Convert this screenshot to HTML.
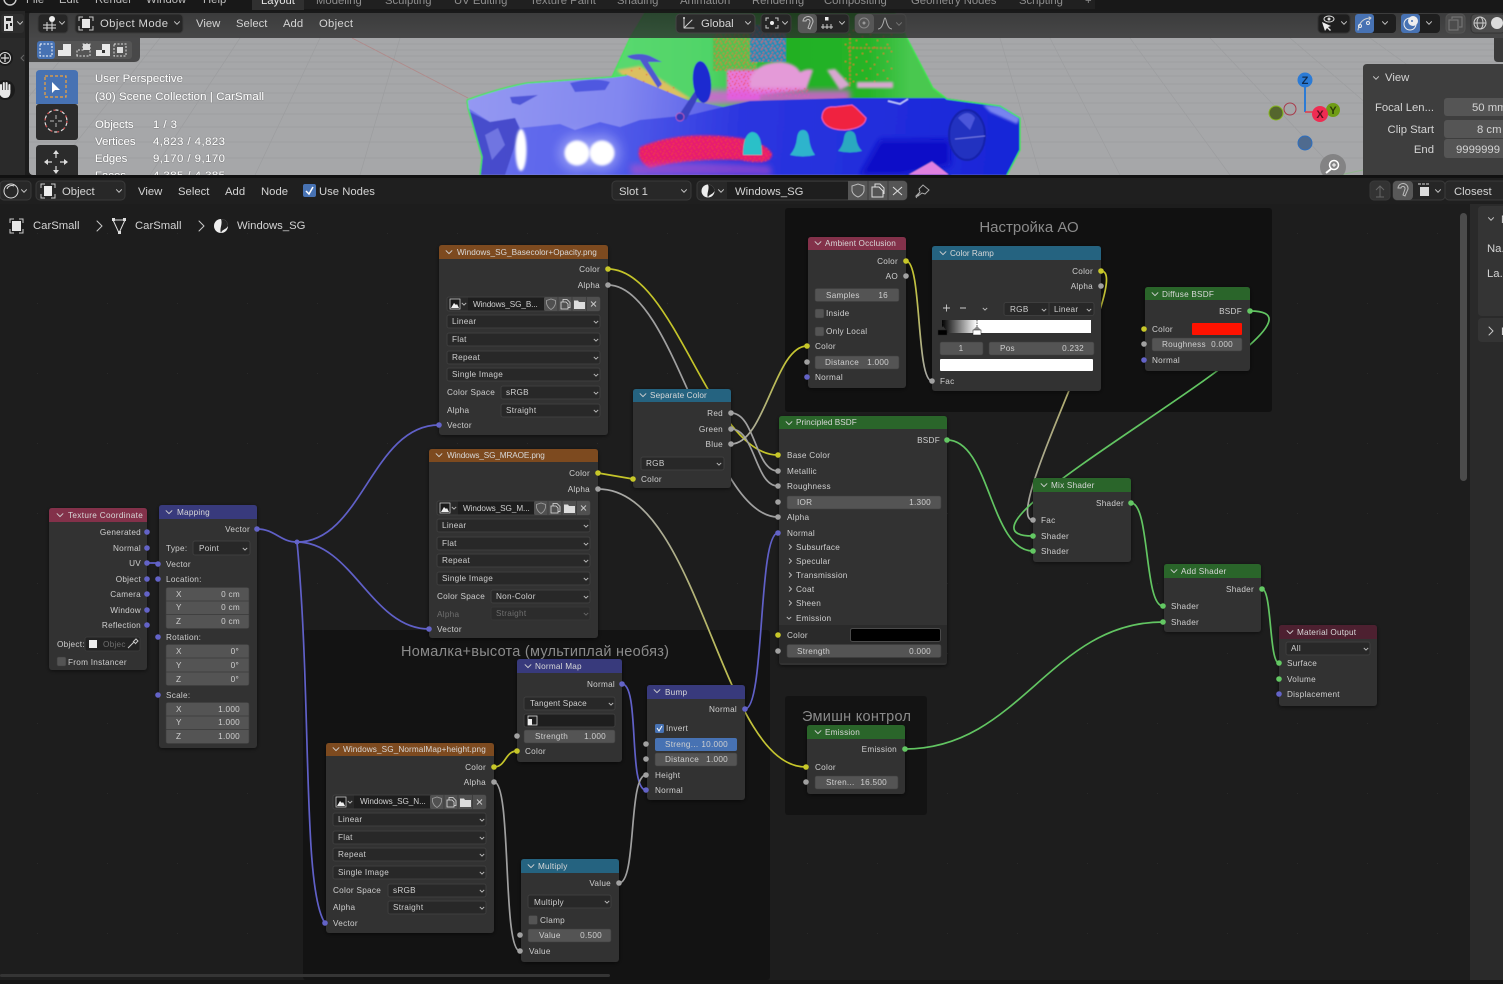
<!DOCTYPE html>
<html><head><meta charset="utf-8"><title>Blender Shader Editor</title>
<style>
html,body{margin:0;padding:0;background:#1d1d1d;overflow:hidden}
svg{display:block;font-family:"Liberation Sans","Noto Sans CJK JP",sans-serif}
.n{fill:#303030;filter:url(#sh)}
.t{font-size:8.2px;fill:#cfcfcf;letter-spacing:.27px}
.r{text-anchor:end}
.c{text-anchor:middle}
.h{font-size:8.2px;fill:#d8d8d8;letter-spacing:.22px}
.dis{fill:#6f6f6f}
.d{fill:#282828;stroke:#3e3e3e;stroke-width:1}
.f{fill:#545454;stroke:#3e3e3e;stroke-width:.6}
.k{fill:#545454;stroke:#3a3a3a;stroke-width:.6}
.y{fill:#c7c729}.g{fill:#a1a1a1}.b{fill:#6363c7}.s{fill:#63c763}
.w{fill:none;stroke-width:1.7;stroke-linecap:round}
.wy{stroke:#c4c42a}.wg{stroke:#a0a0a0}.wb{stroke:#6060c8}.ws{stroke:#62c562}
.u{font-size:11.3px;fill:#d4d4d4}
.ub{fill:#262626;stroke:#3a3a3a;stroke-width:1}
.vt{font-size:11.4px;fill:#fff;filter:url(#ts)}
.fr{font-size:14.5px;fill:#8b8b8b}
.ic{fill:none;stroke:#d0d0d0;stroke-width:1;stroke-linecap:round;stroke-linejoin:round}
.ch{fill:none;stroke:#c8c8c8;stroke-width:1;stroke-linecap:round;stroke-linejoin:round}
</style></head>
<body>
<svg xmlns="http://www.w3.org/2000/svg" width="1503" height="984" viewBox="0 0 1503 984">
<defs>
<filter id="sh" x="-10%" y="-10%" width="120%" height="120%"><feDropShadow dx="0" dy="1" stdDeviation="2" flood-color="#000" flood-opacity=".55"/></filter>
<filter id="ts" x="-5%" y="-30%" width="110%" height="160%"><feDropShadow dx="0" dy="0" stdDeviation=".5" flood-color="#000" flood-opacity=".6"/></filter>
<filter id="bl0"><feGaussianBlur stdDeviation=".5"/></filter>
<filter id="bl1" x="-20%" y="-20%" width="140%" height="140%"><feGaussianBlur stdDeviation="1"/></filter>
<filter id="bl3" x="-30%" y="-30%" width="160%" height="160%"><feGaussianBlur stdDeviation="3"/></filter>
<filter id="bl6" x="-40%" y="-40%" width="180%" height="180%"><feGaussianBlur stdDeviation="6"/></filter>
<clipPath id="vp"><rect x="29" y="11" width="1474" height="164"/></clipPath>
<pattern id="dots" x="37" y="23" width="70" height="70" patternUnits="userSpaceOnUse"><rect width="1" height="1" fill="#2a2a2a"/></pattern>
<pattern id="noise" width="9" height="7" patternUnits="userSpaceOnUse"><rect x="1" y="1" width="1.2" height="1.2" fill="#f0402a"/><rect x="5" y="0" width="1.2" height="1.2" fill="#f0402a"/><rect x="7" y="3" width="1.2" height="1.2" fill="#f0402a"/><rect x="3" y="4" width="1.2" height="1.2" fill="#f0402a"/><rect x="6" y="5.500" width="1.2" height="1.2" fill="#f0402a"/><rect x="0" y="6" width="1.2" height="1.2" fill="#f0402a"/></pattern>
<pattern id="sparse" width="21" height="17" patternUnits="userSpaceOnUse"><rect x="1" y="2" width="1.2" height="1.2" fill="#f0402a"/><rect x="9" y="0" width="1.2" height="1.2" fill="#f0402a"/><rect x="16" y="6" width="1.2" height="1.2" fill="#f0402a"/><rect x="5" y="10" width="1.2" height="1.2" fill="#f0402a"/><rect x="13" y="13" width="1.2" height="1.2" fill="#f0402a"/></pattern>
<linearGradient id="gYG1" gradientUnits="userSpaceOnUse" x1="0" y1="271" x2="0" y2="520"><stop offset="0" stop-color="#c7c729"/><stop offset=".5" stop-color="#b0ac70"/><stop offset="1" stop-color="#a8a8a8"/></linearGradient>
<linearGradient id="gYG2" gradientUnits="userSpaceOnUse" x1="0" y1="261" x2="0" y2="381"><stop offset="0" stop-color="#c7c729"/><stop offset="1" stop-color="#a8a8a8"/></linearGradient>
<linearGradient id="gGY1" gradientUnits="userSpaceOnUse" x1="0" y1="489" x2="0" y2="767"><stop offset="0" stop-color="#a8a8a8"/><stop offset="1" stop-color="#c7c729"/></linearGradient>
<linearGradient id="gGY2" gradientUnits="userSpaceOnUse" x1="0" y1="444" x2="0" y2="346"><stop offset="0" stop-color="#a8a8a8"/><stop offset="1" stop-color="#c7c729"/></linearGradient>
<linearGradient id="hood" gradientUnits="userSpaceOnUse" x1="470" y1="100" x2="1010" y2="140"><stop offset="0" stop-color="#6a72ee"/><stop offset=".25" stop-color="#5660ea"/><stop offset=".5" stop-color="#2c36e0"/><stop offset="1" stop-color="#1826d8"/></linearGradient>
<linearGradient id="lav" gradientUnits="userSpaceOnUse" x1="470" y1="90" x2="720" y2="110"><stop offset="0" stop-color="#9498f2"/><stop offset=".6" stop-color="#8287f0"/><stop offset="1" stop-color="#5a60e8"/></linearGradient>
<linearGradient id="roof" gradientUnits="userSpaceOnUse" x1="630" y1="0" x2="910" y2="0"><stop offset="0" stop-color="#58d86e"/><stop offset=".28" stop-color="#50d468"/><stop offset=".55" stop-color="#22b024"/><stop offset=".85" stop-color="#26b428"/><stop offset="1" stop-color="#48c850"/></linearGradient>
<linearGradient id="ramp" x1="0" y1="0" x2="1" y2="0"><stop offset="0" stop-color="#000"/><stop offset=".232" stop-color="#fff"/><stop offset="1" stop-color="#fff"/></linearGradient>
<linearGradient id="hdr" x1="0" y1="0" x2="0" y2="1"><stop offset="0" stop-color="#1c1c1c"/><stop offset="1" stop-color="#2c2c2c"/></linearGradient>
<polyline id="v" class="ch" points="-2.500,-1.300 0,1.300 2.500,-1.300"/>
<polyline id="vs" points="-2.200,-1.100 0,1.100 2.200,-1.100" fill="none" stroke="#bdbdbd" stroke-width=".9"/>
<polyline id="vh" points="-3.200,-1.600 0,1.600 3.200,-1.600" fill="none" stroke="#d0d0d0" stroke-width=".9"/>
<polyline id="rt" points="-1,-2.500 1.500,0 -1,2.500" fill="none" stroke="#bdbdbd" stroke-width=".9"/>
<g id="imgrow"><rect x="0" y="0" width="153" height="14" rx="2" fill="#282828" stroke="#3e3e3e"/><rect x="97" y="0" width="56" height="14" rx="2" fill="#505050"/><rect x="21" y="0.500" width="76" height="13" fill="#1e1e1e"/><path d="M111 0v14M125 0v14M139.500 0v14" stroke="#3a3a3a" stroke-width=".8"/><rect x="3" y="2" width="10" height="10" fill="#1a1a1a" stroke="#ddd" stroke-width=".7"/><path d="M4 11l3-5 2 2 1-1 2 4z" fill="#eee"/><use href="#vs" x="17" y="7"/><path d="M99.500 3.500l4.500-1.500 4.500 1.500v3q-1 4-4.500 6-3.500-2-4.500-6z" fill="none" stroke="#9a9a9a" stroke-width=".9"/><path d="M114 5h5l2 2v5h-7zM116 5V2.500h4l3 3v5h-2" fill="none" stroke="#ddd" stroke-width=".8"/><path d="M127 12V3.500h4l1 1.500h6v7z" fill="#ddd"/><path d="M144 4.500l5 5m0-5l-5 5" stroke="#ccc" stroke-width=".9"/></g>
</defs>

<!-- page backdrop -->
<rect width="1503" height="984" fill="#1d1d1d"/>

<!-- top bar -->
<rect width="1503" height="11" fill="#181818"/>
<rect x="252" y="0" width="843" height="9" fill="#202020"/>
<rect x="252" y="0" width="52" height="10" fill="#303030"/>
<g font-size="11.3" fill="#bdbdbd">
<text x="26" y="3">File</text><text x="59" y="3">Edit</text><text x="95" y="3">Render</text><text x="146" y="3">Window</text><text x="203" y="3">Help</text>
<text x="261" y="4" fill="#e6e6e6">Layout</text>
<g fill="#8e8e8e"><text x="316" y="4">Modeling</text><text x="385" y="4">Sculpting</text><text x="454" y="4">UV Editing</text><text x="530" y="4">Texture Paint</text><text x="617" y="4">Shading</text><text x="680" y="4">Animation</text><text x="752" y="4">Rendering</text><text x="824" y="4">Compositing</text><text x="911" y="4">Geometry Nodes</text><text x="1019" y="4">Scripting</text><text x="1085" y="4">+</text></g>
</g>
<circle cx="10" cy="-1" r="6" fill="none" stroke="#ccc" stroke-width="1.500"/>

<!-- 3D viewport floor -->
<rect x="0" y="11" width="29" height="164" fill="#1c1c1c"/>
<rect x="29" y="11" width="1474" height="164" rx="4" fill="#a6a7a9"/>
<g stroke="#9c9d9f" stroke-width=".7">
<path d="M29 44H1503M29 50H1503M29 56H1503M29 62H1503M29 69H1503M29 76H1503M29 84H1503M29 93H1503M29 103H1503M29 114H1503M29 127H1503M29 142H1503M29 158H1503"/>
<path d="M80 38L-40 175M160 38L50 175M240 38L150 175M320 38L255 175M400 38L360 175M1050 38L1120 175M1130 38L1230 175M1210 38L1340 175M1290 38L1450 175M1370 38L1560 175M1000 38L1040 175"/>
</g>
<path d="M352 38L468 98" stroke="#b08a8a" stroke-width=".9"/>
<path d="M1340 175L1363 170" stroke="#8fb58a" stroke-width=".9"/>

<!-- car -->
<g clip-path="url(#vp)"><g filter="url(#bl0)">
<path d="M612 77L630 38L648 8H893L907 38L933 88L947 99V112H612Z" fill="url(#roof)" stroke="#36f04a" stroke-width="1"/>
<rect x="713" y="38" width="44" height="33" fill="#58c050"/>
<rect x="713" y="25" width="44" height="46" fill="url(#noise)"/>
<path d="M617 70L640 66L693 100L640 92Z" fill="#dcc060" filter="url(#bl1)"/>
<path d="M617 72L640 68L690 96L660 92Z" fill="url(#sparse)"/>
<rect x="750" y="25" width="36" height="37" fill="#2c8ab4"/>
<rect x="750" y="25" width="36" height="37" fill="url(#noise)"/>
<rect x="845" y="25" width="50" height="62" fill="url(#sparse)"/>
<path d="M850 38V85M848 48H890" stroke="#e06a30" stroke-width="1.600" stroke-dasharray="2 2" opacity=".8"/>
<path d="M727 70H760V100H727Z" fill="#e878d8" filter="url(#bl1)"/>
<rect x="727" y="70" width="33" height="27" fill="url(#noise)"/>
<path d="M750 78Q758 62 782 62Q796 64 800 72Q808 68 813 70L806 90L750 96Z" fill="#e49ad8" filter="url(#bl1)"/>
<rect x="750" y="88" width="60" height="9" fill="url(#noise)"/>
<path d="M827 70L835 69L850 85L840 90Z" fill="#d8a8d0" filter="url(#bl1)"/>
<rect x="857" y="82" width="36" height="6" fill="#d8a8d0" filter="url(#bl1)"/>
<rect x="700" y="90" width="150" height="14" fill="#e058e0" opacity=".8" filter="url(#bl3)"/>

<path d="M467 100Q500 88 527 83L612 77L627 75L687 100L723 107L750 101L850 98L945 98L1000 106L1020 118V150L1007 175H480L482 157L468 108Z" fill="url(#hood)"/>
<path d="M467 100Q500 88 527 83L612 77L627 75L687 100L723 107L690 115L640 120L620 127L600 122L575 130L560 124L520 128L515 118L490 122L468 108Z" fill="url(#lav)"/>
<path d="M570 83Q595 77 610 82L605 90L575 92Z" fill="#4f58e0"/>
<path d="M510 97L538 95L520 105L512 103Z" fill="#4f56d8"/>
<path d="M490 122L515 118L520 130L505 175H480L482 157L470 112Z" fill="#3c42c0" opacity=".75"/>
<path d="M485 135L498 128L505 145L492 160Z" fill="#8a90ee" opacity=".6"/>
<path d="M983 105L1000 106L1020 118L1017 124L990 112Z" fill="#7884f0" filter="url(#bl1)"/>
<path d="M880 140H950V165L900 175H860Z" fill="#0c10c8" filter="url(#bl3)"/>
<path d="M888 101L900 104L908 99" fill="none" stroke="#c4ccff" stroke-width="1.500"/>
<path d="M467 100Q500 88 527 83L612 77L627 75M933 88L947 99L1000 106L1020 118V150L1007 175M480 175L482 157L468 108L467 100" fill="none" stroke="#3cf04a" stroke-width="1.300"/>

<path d="M640 147Q680 130 740 138Q770 145 772 155Q770 166 740 160Q690 158 650 168Q635 160 640 147Z" fill="#e81a70" filter="url(#bl1)"/>
<path d="M640 147Q680 130 740 138Q770 145 772 155Q770 166 740 160Q690 158 650 168Q635 160 640 147Z" fill="url(#noise)"/>
<path d="M630 165Q700 160 770 166L772 175H632Z" fill="#c050c8" opacity=".55" filter="url(#bl3)"/>
<path d="M743 155Q743 134 752 132Q762 132 762 155Z" fill="#2cc0c8"/>
<path d="M790 155Q796 148 797 138Q798 130 803 130Q808 130 809 138Q810 148 815 155Q803 158 790 155Z" fill="#2eb4cc"/>
<path d="M838 151Q843 146 844 138Q845 131 850 131Q855 131 856 138Q857 146 862 151Q850 154 838 151Z" fill="#2aa8c0"/>
<path d="M822 118Q822 106 835 107L852 105L856 108L866 118Q865 128 845 130Q825 130 822 118Z" fill="#f02040" stroke="#f060b0" stroke-width="1"/>
<ellipse cx="967" cy="135" rx="18" ry="25" fill="#2030c0" stroke="#1622a8" stroke-width="2"/>
<path d="M958 118Q968 108 975 118L970 130Z" fill="#5860e0" opacity=".8"/>
<path d="M955 139L985 136" stroke="#8a90ee" stroke-width=".8"/>
<path d="M907 175L932 161L950 175Z" fill="#e080e0" stroke="#2030c0"/>
<ellipse cx="521" cy="150" rx="5.500" ry="21" fill="#fff" filter="url(#bl1)"/>
<circle cx="577" cy="153" r="18" fill="#c0c4ff" opacity=".55" filter="url(#bl6)"/>
<circle cx="602" cy="153" r="18" fill="#c0c4ff" opacity=".55" filter="url(#bl6)"/>
<circle cx="577" cy="153" r="12.500" fill="#fff" filter="url(#bl1)"/>
<circle cx="602" cy="153" r="12.500" fill="#fff" filter="url(#bl1)"/>
<path d="M627 56Q640 52 650 56L662 62L652 62L648 62L662 84L658 88L640 60Q630 60 627 56Z" fill="#5058d0"/>
<path d="M677 118L697 88L702 90L686 120Z" fill="#3a42c0"/>
<circle cx="680" cy="117" r="4" fill="#3038b8" stroke="#d060b8" stroke-width=".7"/>
<ellipse cx="702" cy="82" rx="9" ry="21" fill="#1e2ad0" transform="rotate(-6 702 82)"/>
</g></g>

<!-- viewport header overlay -->
<rect x="29" y="11" width="1474" height="27" fill="url(#hdr)" opacity=".78"/>
<rect x="0" y="11" width="1503" height="2" fill="#161616" opacity=".9"/>
<path d="M29 38H140V56Q140 62 134 62H29Z" fill="#3e3e3e" opacity=".9"/>

<!-- left toolbar -->
<rect x="0" y="11" width="25" height="164" fill="#262626"/>
<rect x="0" y="38" width="28" height="137" fill="#2a2a2a"/>
<rect x="25" y="38" width="4" height="137" fill="#1c1c1c"/>
<rect x="1" y="14" width="23" height="19" rx="3" fill="#2e2e2e"/>
<rect x="4" y="16" width="9" height="15" fill="#ddd"/><path d="M6 18h5v3H6zM6 24h2v5H6zM10 23h2v3h-2z" fill="#222"/>
<use href="#v" x="20" y="23"/>
<circle cx="5" cy="58" r="8" fill="#1b1b1b"/><path d="M5 54v8M1 58h8" stroke="#ddd" stroke-width="1.200"/><circle cx="5" cy="58" r="5.500" fill="none" stroke="#ddd"/>
<polyline points="24,55 21,58 24,61" fill="none" stroke="#666"/>
<circle cx="5" cy="90" r="10" fill="#1b1b1b"/>
<path d="M1 92V85M3.800 90V83M6.600 90V83M9.400 91V85" stroke="#e8e8e8" stroke-width="2" fill="none" stroke-linecap="round"/>
<path d="M0 90H10.400V93Q10 98 5 98Q1 98 -1 93Z" fill="#e8e8e8"/>

<!-- selection-mode row -->
<rect x="37" y="41" width="95" height="18" rx="3" fill="#555"/>
<rect x="37" y="41" width="18" height="18" rx="3" fill="#4772b3"/>
<rect x="40" y="44" width="12" height="12" fill="none" stroke="#fff" stroke-dasharray="2 1.500"/>
<path d="M58 56V50H63V44H71V56Z" fill="#e8e8e8"/>
<path d="M77 56V50H83V44H90V56Z" fill="none" stroke="#ddd" stroke-dasharray="2 1.500"/><rect x="83" y="44" width="7" height="6" fill="#ddd"/>
<path d="M96 56V50H102V44H110V56Z" fill="#e8e8e8"/><rect x="102" y="50" width="3" height="3" fill="#333"/>
<rect x="114" y="44" width="12" height="12" fill="none" stroke="#ddd" stroke-dasharray="2 1.500"/><rect x="117" y="47" width="6" height="6" fill="#ddd"/>

<!-- viewport header widgets -->
<rect x="38" y="14" width="30" height="19" rx="4" class="ub"/>
<path d="M43 28H56M47 22V31M52 22V31M43 25H56" stroke="#ddd" fill="none" stroke-width="1"/><circle cx="52" cy="19" r="3" fill="#eee"/><use href="#v" x="62" y="23"/>
<rect x="75" y="14" width="108" height="19" rx="4" class="ub"/>
<rect x="82" y="19" width="8" height="9" fill="#e8e8e8"/><path d="M79 21V17H83M89 17H93V21M93 26V30H89M83 30H79V26" stroke="#ccc" fill="none"/>
<text x="100" y="27" class="u" textLength="68" fill="#e0e0e0">Object Mode</text><use href="#v" x="177" y="23"/>
<text x="196" y="27" class="u">View</text><text x="236" y="27" class="u">Select</text><text x="283" y="27" class="u">Add</text><text x="319" y="27" class="u" textLength="34">Object</text>

<rect x="676" y="14" width="79" height="19" rx="4" fill="#2b2b2b" stroke="#444"/>
<path d="M684 18V28H694M684 28L692 20" class="ic"/><circle cx="684" cy="18" r="1" fill="#ddd"/>
<text x="701" y="27" class="u">Global</text><use href="#v" x="748" y="23"/>
<rect x="761" y="14" width="30" height="19" rx="4" fill="#262626" stroke="#3c3c3c"/>
<circle cx="772" cy="23" r="2" fill="#eee"/><path d="M766 21V18H769M775 18H778V21M778 25V28H775M769 28H766V25" stroke="#ccc" fill="none"/><use href="#v" x="785" y="23"/>
<rect x="798" y="14" width="51" height="19" rx="4" fill="#262626" stroke="#3c3c3c"/>
<rect x="798" y="14" width="19" height="19" rx="4" fill="#585858"/>
<path d="M803 21a5 5 0 1 1 10 1l-3 7-2-1 2-6a2 2 0 1 0-4-1z" fill="none" stroke="#bbb"/>
<path d="M821 27H833M823 24V29M827 24V29M831 24V29" stroke="#ccc"/><rect x="825" y="17" width="3.500" height="3.500" fill="#eee"/><use href="#v" x="842" y="23"/>
<rect x="855" y="14" width="51" height="19" rx="4" fill="#3c3c3c" stroke="#464646"/>
<rect x="855" y="14" width="19" height="19" rx="4" fill="#565656"/><circle cx="864" cy="23" r="5" fill="none" stroke="#888"/><circle cx="864" cy="23" r="1.500" fill="#999"/>
<path d="M878 29Q882 29 884 20Q885 16 886 20Q888 29 892 29" fill="none" stroke="#aaa"/><use href="#v" x="899" y="24" opacity=".4"/>

<rect x="1318" y="14" width="32" height="19" rx="4" fill="#1e1e1e" stroke="#333"/>
<path d="M1322 22l3 9 2-3 3 3 1-1-3-3 3-1z" fill="#eee"/><ellipse cx="1329" cy="19" rx="5" ry="3" fill="none" stroke="#ddd"/><circle cx="1329" cy="19" r="1.500" fill="#ddd"/><use href="#v" x="1344" y="23"/>
<rect x="1355" y="14" width="41" height="19" rx="4" fill="#1e1e1e"/><rect x="1355" y="14" width="19" height="19" rx="3" fill="#4772b3"/>
<path d="M1358 30Q1360 18 1371 18M1369 17l2 1-2 2" class="ic"/><circle cx="1360" cy="26" r="1.500" fill="none" stroke="#eee"/><circle cx="1368" cy="23" r="1.500" fill="none" stroke="#eee"/><use href="#v" x="1385" y="23"/>
<rect x="1401" y="14" width="39" height="19" rx="4" fill="#1e1e1e"/><rect x="1401" y="14" width="19" height="19" rx="3" fill="#4772b3"/>
<circle cx="1410" cy="24" r="6" fill="none" stroke="#eee"/><circle cx="1413" cy="21" r="5" fill="#eee"/><circle cx="1412" cy="21" r="1" fill="#4772b3"/><use href="#v" x="1429" y="23"/>
<rect x="1446" y="14" width="19" height="19" rx="4" fill="#4c4c4c" stroke="#555"/><path d="M1452 19V17H1462V27H1459M1449 20H1458V30H1449Z" fill="none" stroke="#7a7a7a"/>
<rect x="1471" y="14" width="34" height="19" rx="4" fill="#4c4c4c" stroke="#333"/>
<circle cx="1480" cy="23" r="6" fill="none" stroke="#ccc"/><ellipse cx="1480" cy="23" rx="3" ry="6" fill="none" stroke="#ccc"/><path d="M1474 23h12" stroke="#ccc"/>
<circle cx="1497" cy="23" r="6" fill="#dcdcdc"/>

<!-- viewport overlay text -->
<text x="95" y="82" class="vt" textLength="88">User Perspective</text>
<text x="95" y="100" class="vt" textLength="169">(30) Scene Collection | CarSmall</text>
<text x="95" y="128" class="vt">Objects</text><text x="153" y="128" class="vt" textLength="24">1 / 3</text>
<text x="95" y="145" class="vt">Vertices</text><text x="153" y="145" class="vt" textLength="72">4,823 / 4,823</text>
<text x="95" y="162" class="vt">Edges</text><text x="153" y="162" class="vt" textLength="72">9,170 / 9,170</text>
<text x="95" y="179" class="vt">Faces</text><text x="153" y="179" class="vt" textLength="72">4,385 / 4,385</text>
<!-- tools -->
<rect x="36" y="104" width="42" height="36" rx="3" fill="#2b2b2b"/>
<path d="M36 104V74Q36 70 40 70H74Q78 70 78 74V104Z" fill="#4772b3"/>
<rect x="45" y="76" width="21" height="21" fill="none" stroke="#f2a33a" stroke-width="1.200" stroke-dasharray="3 2"/>
<path d="M52 82V93L55 90L60 90Z" fill="#fff"/>
<circle cx="56" cy="121" r="11" fill="none" stroke="#ddd" stroke-width="1.200" stroke-dasharray="5 2"/><circle cx="56" cy="121" r="11" fill="none" stroke="#c44" stroke-width="1.200" stroke-dasharray="2 5"/>
<path d="M56 115v4M56 123v4M50 121h4M58 121h4" stroke="#bbb"/>
<path d="M36 175V149Q36 145 40 145H74Q78 145 78 149V175Z" fill="#2b2b2b"/>
<path d="M56 153v5M56 166v5M47 162h5M60 162h5" stroke="#ddd" stroke-width="1.200"/><path d="M56 150l-3 4h6zM56 174l-3-4h6zM44 162l4-3v6zM68 162l-4-3v6z" fill="#ddd"/>

<!-- gizmo -->
<path d="M1305 85V112" stroke="#2b7bd6" stroke-width="2"/><path d="M1305 112H1316" stroke="#e03a4a" stroke-width="1.500"/>
<circle cx="1290" cy="109" r="6" fill="none" stroke="#a83a4a" stroke-width="1"/>
<circle cx="1276" cy="113" r="7" fill="#55662e" stroke="#86b71e" stroke-width="1"/>
<circle cx="1305" cy="143" r="7" fill="#4f6b8f" stroke="#2d6fc0" stroke-width="1"/>
<circle cx="1333" cy="110" r="7" fill="#6f9c14"/><text x="1333" y="114" class="c" font-size="11" font-weight="bold" fill="#2c3a08">Y</text>
<circle cx="1305" cy="80" r="7.500" fill="#2b7bd6"/><text x="1305" y="84" class="c" font-size="11" font-weight="bold" fill="#0f2c50">Z</text>
<circle cx="1320" cy="114" r="8" fill="#ef2c52"/><text x="1320" y="118" class="c" font-size="11" font-weight="bold" fill="#5a0f1e">X</text>
<circle cx="1333" cy="167" r="13" fill="#7a7a7a" opacity=".8"/><circle cx="1334" cy="165" r="4.500" fill="none" stroke="#fff" stroke-width="1.500"/><path d="M1331 169l-5 4" stroke="#fff" stroke-width="2"/><path d="M1334 163v4M1332 165h4" stroke="#fff"/>

<!-- N panel in viewport -->
<path d="M1494 38V58Q1494 62 1498 62H1503V38Z" fill="#3a3a3a"/>
<path d="M1363 175V68Q1363 64 1367 64H1503V175Z" fill="#3e3e3e"/>
<use href="#v" x="1376" y="78"/>
<text x="1385" y="81" class="u" fill="#eee">View</text>
<text x="1434" y="111" class="r u">Focal Len...</text><text x="1434" y="133" class="r u">Clip Start</text><text x="1434" y="153" class="r u">End</text>
<rect x="1444" y="98" width="70" height="18" rx="3" fill="#555"/><rect x="1444" y="120" width="70" height="18" rx="3" fill="#555"/><rect x="1444" y="139" width="70" height="19" rx="3" fill="#555"/>
<text x="1472" y="111" class="u">50 mm</text><text x="1477" y="133" class="u">8 cm</text><text x="1456" y="153" class="u">9999999</text>

<!-- divider + node editor -->
<rect x="0" y="175" width="1503" height="3" fill="#111"/>
<rect x="0" y="178" width="1503" height="26" fill="#1f1f1f"/>
<rect x="0" y="204" width="1503" height="780" fill="#1d1d1d"/>
<rect x="0" y="204" width="1470" height="776" fill="url(#dots)"/>

<!-- node editor header -->
<rect x="0" y="181" width="31" height="19" rx="4" fill="#282828" stroke="#3a3a3a"/>
<circle cx="11" cy="191" r="7" fill="none" stroke="#ddd"/><path d="M7 189a5 5 0 0 1 7-3" fill="none" stroke="#ddd"/><use href="#v" x="24" y="191"/>
<rect x="36" y="181" width="89" height="19" rx="4" fill="#282828" stroke="#3a3a3a"/>
<rect x="44" y="186" width="8" height="10" fill="#eee"/><path d="M41 188V184H45M51 184H55V188M55 194V198H51M45 198H41V194" stroke="#ccc" fill="none"/>
<text x="62" y="195" class="u">Object</text><use href="#v" x="119" y="191"/>
<text x="138" y="195" class="u">View</text><text x="178" y="195" class="u">Select</text><text x="225" y="195" class="u">Add</text><text x="261" y="195" class="u">Node</text>
<rect x="303" y="184" width="13" height="13" rx="2" fill="#4772b3"/><polyline points="306,191 309,194 313,187" fill="none" stroke="#fff" stroke-width="1.500"/>
<text x="319" y="195" class="u" fill="#eee">Use Nodes</text>
<rect x="612" y="181" width="79" height="19" rx="4" fill="#282828" stroke="#3a3a3a"/><text x="619" y="195" class="u">Slot 1</text><use href="#v" x="684" y="191"/>
<rect x="697" y="181" width="210" height="19" rx="4" fill="#282828" stroke="#3a3a3a"/>
<circle cx="708" cy="191" r="6.500" fill="#eee"/><path d="M708 184.500A6.500 6.500 0 0 1 714.500 191C712.500 195 709 194 708 197.500C706 194 710 189 708 184.500Z" fill="#222"/><use href="#v" x="721" y="191"/>
<rect x="727" y="182" width="121" height="17" fill="#1e1e1e"/>
<text x="735" y="195" class="u">Windows_SG</text>
<path d="M848 181H903Q907 181 907 185V196Q907 200 903 200H848Z" fill="#555"/>
<path d="M868 181v19M888 181v19" stroke="#3a3a3a"/>
<path d="M852 186l6-2 6 2v5q-1 4-6 6-5-2-6-6z" fill="none" stroke="#bbb"/>
<path d="M872 187h7l4 4v6h-11zM875 187v-3h5l4 4v6" fill="none" stroke="#ddd"/>
<path d="M893 187l9 8m0-8l-9 8" stroke="#ddd"/>
<path d="M916 196l4-4-1-3 4-4 6 5-4 4-3-1-4 3z M920 192l-4 6" fill="none" stroke="#aaa"/>
<rect x="1370" y="181" width="20" height="19" rx="4" fill="#333" stroke="#3a3a3a"/><path d="M1380 197V186M1376 190l4-4 4 4M1376 197h8" fill="none" stroke="#666"/>
<rect x="1393" y="181" width="52" height="19" rx="4" fill="#262626" stroke="#3a3a3a"/><rect x="1393" y="181" width="20" height="19" rx="4" fill="#585858"/>
<path d="M1398 188a5 5 0 1 1 10 1l-3 7-2-1 2-6a2 2 0 1 0-4-1z" fill="none" stroke="#bbb"/>
<path d="M1418 184h12" stroke="#ddd" stroke-dasharray="3 1"/><rect x="1420" y="187" width="9" height="9" fill="#ddd"/><use href="#v" x="1438" y="191"/>
<rect x="1445" y="181" width="62" height="19" rx="4" fill="#282828" stroke="#3a3a3a"/><text x="1454" y="195" class="u">Closest</text>

<!-- breadcrumb -->
<rect x="12" y="221" width="9" height="10" fill="#e8e8e8"/><path d="M10 223V219H14M19 219H23V223M23 229V233H19M14 233H10V229" stroke="#ccc" fill="none"/>
<text x="33" y="229" class="u">CarSmall</text>
<polyline points="97,221 102,226 97,231" class="ch"/>
<path d="M113 220L125 220L119 233Z" fill="none" stroke="#ddd"/><rect x="112" y="218" width="3" height="3" fill="#ddd"/><rect x="123" y="218" width="3" height="3" fill="#ddd"/><rect x="118" y="231" width="3" height="3" fill="#ddd"/>
<text x="135" y="229" class="u">CarSmall</text>
<polyline points="199,221 204,226 199,231" class="ch"/>
<circle cx="221" cy="226" r="7" fill="#eee"/><path d="M221 219A7 7 0 0 1 228 226C226 230 222 229 221 233C219 229 223 224 221 219Z" fill="#222"/>
<text x="237" y="229" class="u">Windows_SG</text>

<!-- frames -->
<rect x="785" y="208" width="487" height="204" rx="3" fill="#111"/>
<rect x="303" y="630" width="467" height="350" rx="3" fill="#131313"/>
<rect x="785" y="696" width="142" height="119" rx="3" fill="#131313"/>
<text x="1029" y="232" class="c fr" style="font-size:15px">Настройка АО</text>
<text x="401" y="656" class="fr" textLength="268">Номалка+высота (мультиплай необяз)</text>
<text x="802" y="721" class="fr" textLength="109">Эмишн контрол</text>

<!-- wires -->
<g>
<path class="w wb" d="M147 563H158"/>
<path class="w wb" d="M257 529C275 529 280 542 297 542"/>
<path class="w wb" d="M297 542C362 542 372 425 439 425"/>
<path class="w wb" d="M297 542C352 542 372 629 429 629"/>
<path class="w wb" d="M297 542C312 700 302 890 325 923"/>
<path class="w wy" d="M598 473L633 479"/>
<path class="w wg" d="M608 285C675 285 710 517 778 517"/>
<path class="w wy" d="M608 269C675 269 710 455 778 455"/>
<path class="w wg" d="M731 413C755 413 755 471 778 471"/>
<path class="w wg" d="M731 429C755 429 755 486 778 486"/>
<path class="w" stroke="url(#gGY2)" d="M731 444C765 444 775 346 807 346"/>
<path class="w" stroke="url(#gGY1)" d="M598 489C700 489 720 767 806 767"/>
<path class="w" stroke="url(#gYG2)" d="M906 261C922 261 916 381 932 381"/>
<path class="w" stroke="url(#gYG1)" d="M1101 271C1135 271 999 520 1033 520"/>
<path class="w ws" d="M1250 311C1365 311 918 536 1033 536"/>
<path class="w ws" d="M947 440C990 440 990 551 1033 551"/>
<path class="w ws" d="M1131 503C1150 503 1144 606 1163 606"/>
<path class="w ws" d="M1262 589C1272 589 1269 663 1279 663"/>
<path class="w ws" d="M905 749C1020 749 1050 622 1163 622"/>
<path class="w wb" d="M622 684C640 684 628 790 646 790"/>
<path class="w wb" d="M745 709C765 709 758 533 778 533"/>
<path class="w wy" d="M494 767C506 767 505 751 517 751"/>
<path class="w wg" d="M494 782C512 782 502 951 520 951"/>
<path class="w wg" d="M619 883C637 883 628 775 646 775"/>
</g>
<circle cx="297" cy="542" r="2.500" class="b"/>

<!-- Texture Coordinate -->
<rect class="n" x="49" y="508" width="98" height="162" rx="3"/>
<path d="M49 522V511Q49 508 52 508H144Q147 508 147 511V522Z" fill="#83314a"/>
<use href="#vh" x="60" y="515"/><text x="68" y="518" class="h" textLength="75">Texture Coordinate</text>
<text x="141" y="535" class="t r">Generated</text><text x="141" y="551" class="t r">Normal</text><text x="141" y="566" class="t r">UV</text><text x="141" y="582" class="t r">Object</text><text x="141" y="597" class="t r">Camera</text><text x="141" y="613" class="t r">Window</text><text x="141" y="628" class="t r">Reflection</text>
<text x="57" y="647" class="t">Object:</text>
<rect x="85" y="637" width="55" height="14" rx="2" fill="#232323" stroke="#3a3a3a"/>
<rect x="89" y="640" width="8" height="8" fill="#eee"/><text x="103" y="647" class="t dis">Objec</text>
<path d="M128 648l6-6m-1-1l3 3m-2-3l2-2 2 2-2 2" stroke="#ccc" fill="none"/>
<rect x="57" y="657" width="9" height="9" rx="1.500" class="k"/><text x="68" y="665" class="t">From Instancer</text>

<!-- Mapping -->
<rect class="n" x="159" y="505" width="98" height="243" rx="3"/>
<path d="M159 519V508Q159 505 162 505H254Q257 505 257 508V519Z" fill="#383a7c"/>
<use href="#vh" x="169" y="512"/><text x="177" y="515" class="h">Mapping</text>
<text x="250" y="532" class="t r">Vector</text>
<text x="166" y="551" class="t">Type:</text><rect x="193" y="541" width="57" height="14" rx="2" class="d"/><text x="199" y="551" class="t">Point</text><use href="#vs" x="245" y="549"/>
<text x="166" y="567" class="t">Vector</text><text x="166" y="582" class="t">Location:</text>
<rect x="166" y="587.500" width="83" height="41" rx="2" class="f"/>
<text x="176" y="597" class="t">X</text><text x="176" y="610" class="t">Y</text><text x="176" y="624" class="t">Z</text>
<text x="240" y="597" class="t r">0 cm</text><text x="240" y="610" class="t r">0 cm</text><text x="240" y="624" class="t r">0 cm</text>
<path d="M166 601H249M166 614.500H249" stroke="#3a3a3a" stroke-width=".8"/>
<text x="166" y="640" class="t">Rotation:</text>
<rect x="166" y="644.500" width="83" height="41" rx="2" class="f"/>
<text x="176" y="654" class="t">X</text><text x="176" y="668" class="t">Y</text><text x="176" y="682" class="t">Z</text>
<text x="239" y="654" class="t r">0°</text><text x="239" y="668" class="t r">0°</text><text x="239" y="682" class="t r">0°</text>
<path d="M166 658H249M166 672H249" stroke="#3a3a3a" stroke-width=".8"/>
<text x="166" y="698" class="t">Scale:</text>
<rect x="166" y="702.500" width="83" height="41" rx="2" class="f"/>
<text x="176" y="712" class="t">X</text><text x="176" y="725" class="t">Y</text><text x="176" y="739" class="t">Z</text>
<text x="240" y="712" class="t r">1.000</text><text x="240" y="725" class="t r">1.000</text><text x="240" y="739" class="t r">1.000</text>
<path d="M166 716H249M166 729.500H249" stroke="#3a3a3a" stroke-width=".8"/>

<!-- Image 1 -->
<rect class="n" x="439" y="245" width="169" height="190" rx="3"/>
<path d="M439 259V248Q439 245 442 245H605Q608 245 608 248V259Z" fill="#7d4a1f"/>
<use href="#vh" x="449" y="252"/><text x="457" y="255" class="h" textLength="140">Windows_SG_Basecolor+Opacity.png</text>
<text x="600" y="272" class="t r">Color</text><text x="600" y="288" class="t r">Alpha</text>
<use href="#imgrow" x="447" y="297"/><text x="473" y="307" class="t" textLength="65">Windows_SG_B...</text>
<rect x="447" y="315" width="153" height="13" rx="2" class="d"/><text x="452" y="324" class="t">Linear</text><use href="#vs" x="596" y="322"/>
<rect x="447" y="333" width="153" height="13" rx="2" class="d"/><text x="452" y="342" class="t">Flat</text><use href="#vs" x="596" y="340"/>
<rect x="447" y="351" width="153" height="13" rx="2" class="d"/><text x="452" y="360" class="t">Repeat</text><use href="#vs" x="596" y="358"/>
<rect x="447" y="368" width="153" height="13" rx="2" class="d"/><text x="452" y="377" class="t">Single Image</text><use href="#vs" x="596" y="375"/>
<text x="447" y="395" class="t">Color Space</text><rect x="501" y="386" width="99" height="13" rx="2" class="d"/><text x="506" y="395" class="t">sRGB</text><use href="#vs" x="596" y="393"/>
<text x="447" y="413" class="t">Alpha</text><rect x="501" y="404" width="99" height="13" rx="2" class="d"/><text x="506" y="413" class="t">Straight</text><use href="#vs" x="596" y="411"/>
<text x="447" y="428" class="t">Vector</text>

<!-- Image 2 -->
<rect class="n" x="429" y="449" width="169" height="189" rx="3"/>
<path d="M429 462V452Q429 449 432 449H595Q598 449 598 452V462Z" fill="#7d4a1f"/>
<use href="#vh" x="439" y="455"/><text x="447" y="458" class="h" textLength="98">Windows_SG_MRAOE.png</text>
<text x="590" y="476" class="t r">Color</text><text x="590" y="492" class="t r">Alpha</text>
<use href="#imgrow" x="437" y="501"/><text x="463" y="511" class="t" textLength="67">Windows_SG_M...</text>
<rect x="437" y="519" width="153" height="13" rx="2" class="d"/><text x="442" y="528" class="t">Linear</text><use href="#vs" x="586" y="526"/>
<rect x="437" y="537" width="153" height="13" rx="2" class="d"/><text x="442" y="546" class="t">Flat</text><use href="#vs" x="586" y="544"/>
<rect x="437" y="554" width="153" height="13" rx="2" class="d"/><text x="442" y="563" class="t">Repeat</text><use href="#vs" x="586" y="561"/>
<rect x="437" y="572" width="153" height="13" rx="2" class="d"/><text x="442" y="581" class="t">Single Image</text><use href="#vs" x="586" y="579"/>
<text x="437" y="599" class="t">Color Space</text><rect x="491" y="590" width="99" height="13" rx="2" class="d"/><text x="496" y="599" class="t">Non-Color</text><use href="#vs" x="586" y="597"/>
<text x="437" y="617" class="t dis">Alpha</text><rect x="491" y="607" width="99" height="13" rx="2" fill="#2c2c2c" stroke="#363636"/><text x="496" y="616" class="t dis">Straight</text><use href="#vs" x="586" y="614" opacity=".4"/>
<text x="437" y="632" class="t">Vector</text>

<!-- Separate Color -->
<rect class="n" x="633" y="389" width="98" height="99" rx="3"/>
<path d="M633 402V392Q633 389 636 389H728Q731 389 731 392V402Z" fill="#256380"/>
<use href="#vh" x="643" y="395"/><text x="650" y="398" class="h" textLength="57">Separate Color</text>
<text x="723" y="416" class="t r">Red</text><text x="723" y="432" class="t r">Green</text><text x="723" y="447" class="t r">Blue</text>
<rect x="641" y="457" width="83" height="13" rx="2" class="d"/><text x="646" y="466" class="t">RGB</text><use href="#vs" x="719" y="464"/>
<text x="641" y="482" class="t">Color</text>

<!-- Ambient Occlusion -->
<rect class="n" x="808" y="237" width="98" height="151" rx="3"/>
<path d="M808 250V240Q808 237 811 237H903Q906 237 906 240V250Z" fill="#83314a"/>
<use href="#vh" x="818" y="243"/><text x="825" y="246" class="h" textLength="71">Ambient Occlusion</text>
<text x="898" y="264" class="t r">Color</text><text x="898" y="279" class="t r">AO</text>
<rect x="815" y="288.500" width="84" height="13" rx="2" class="f"/><text x="826" y="298" class="t">Samples</text><text x="888" y="298" class="t r">16</text>
<rect x="815" y="309" width="9" height="9" rx="1.500" class="k"/><text x="826" y="316" class="t">Inside</text>
<rect x="815" y="327" width="9" height="9" rx="1.500" class="k"/><text x="826" y="334" class="t">Only Local</text>
<text x="815" y="349" class="t">Color</text>
<rect x="815" y="356" width="84" height="13" rx="2" class="f"/><text x="825" y="365" class="t">Distance</text><text x="889" y="365" class="t r">1.000</text>
<text x="815" y="380" class="t">Normal</text>

<!-- Color Ramp -->
<rect class="n" x="932" y="246" width="169" height="145" rx="3"/>
<path d="M932 260V249Q932 246 935 246H1098Q1101 246 1101 249V260Z" fill="#256380"/>
<use href="#vh" x="943" y="253"/><text x="950" y="256" class="h" textLength="44">Color Ramp</text>
<text x="1093" y="274" class="t r">Color</text><text x="1093" y="289" class="t r">Alpha</text>
<path d="M943 308h7M946.500 304.500v7M960 308h6" stroke="#ccc" stroke-width=".9"/><use href="#vs" x="985" y="309"/>
<rect x="1004" y="302.500" width="90" height="13" rx="2" class="d"/><path d="M1049 303v12" stroke="#3e3e3e"/>
<text x="1010" y="312" class="t">RGB</text><use href="#vs" x="1044" y="310"/><text x="1054" y="312" class="t">Linear</text><use href="#vs" x="1089" y="310"/>
<rect x="942" y="320" width="149" height="13" fill="url(#ramp)"/>
<path d="M943 320v9" stroke="#111" stroke-dasharray="1.500 1"/><path d="M943 326l-3 4h6z" fill="#333"/><rect x="938" y="330" width="9" height="5" fill="#000" stroke="#222" stroke-width=".5"/>
<path d="M977 320v9" stroke="#555" stroke-dasharray="1.500 1"/><path d="M977 326l-4 4h8z" fill="#888"/><rect x="973" y="330" width="8" height="5" fill="#fff" stroke="#222" stroke-width=".5"/>
<rect x="940" y="342" width="43" height="13" rx="2" class="f"/><text x="961" y="351" class="t c">1</text>
<rect x="989" y="342" width="105" height="13" rx="2" class="f"/><text x="1000" y="351" class="t">Pos</text><text x="1084" y="351" class="t r">0.232</text>
<rect x="940" y="359" width="153" height="12" rx="1" fill="#fff"/>
<text x="940" y="384" class="t">Fac</text>

<!-- Diffuse -->
<rect class="n" x="1145" y="287" width="105" height="84" rx="3"/>
<path d="M1145 300V290Q1145 287 1148 287H1247Q1250 287 1250 290V300Z" fill="#2a652a"/>
<use href="#vh" x="1155" y="294"/><text x="1162" y="297" class="h">Diffuse BSDF</text>
<text x="1242" y="314" class="t r">BSDF</text>
<text x="1152" y="332" class="t">Color</text><rect x="1192" y="323" width="50" height="12" rx="1" fill="#ff1200"/>
<rect x="1152" y="338" width="90" height="13" rx="2" class="f"/><text x="1162" y="347" class="t">Roughness</text><text x="1233" y="347" class="t r">0.000</text>
<text x="1152" y="363" class="t">Normal</text>

<!-- Principled -->
<rect class="n" x="779" y="416" width="168" height="249" rx="3"/>
<rect x="779" y="625" width="168" height="38" fill="#2a2a2a"/>
<path d="M779 429V419Q779 416 782 416H944Q947 416 947 419V429Z" fill="#2a652a"/>
<use href="#vh" x="789" y="423"/><text x="796" y="425" class="h" textLength="61">Principled BSDF</text>
<text x="940" y="443" class="t r">BSDF</text>
<text x="787" y="458" class="t">Base Color</text><text x="787" y="474" class="t">Metallic</text><text x="787" y="489" class="t">Roughness</text>
<rect x="787" y="496" width="154" height="13" rx="2" class="f"/><text x="797" y="505" class="t">IOR</text><text x="931" y="505" class="t r">1.300</text>
<text x="787" y="520" class="t">Alpha</text><text x="787" y="536" class="t">Normal</text>
<use href="#rt" x="790" y="547"/><text x="796" y="550" class="t">Subsurface</text>
<use href="#rt" x="790" y="561"/><text x="796" y="564" class="t">Specular</text>
<use href="#rt" x="790" y="575"/><text x="796" y="578" class="t">Transmission</text>
<use href="#rt" x="790" y="589"/><text x="796" y="592" class="t">Coat</text>
<use href="#rt" x="790" y="603"/><text x="796" y="606" class="t">Sheen</text>
<use href="#vs" x="789" y="618"/><text x="796" y="621" class="t">Emission</text>
<text x="787" y="638" class="t">Color</text><rect x="850.500" y="628.500" width="90" height="13" rx="2" fill="#000" stroke="#4a4a4a"/>
<rect x="787" y="644.500" width="154" height="13" rx="2" class="f"/><text x="797" y="654" class="t">Strength</text><text x="931" y="654" class="t r">0.000</text>

<!-- Mix Shader -->
<rect class="n" x="1033" y="478" width="98" height="84" rx="3"/>
<path d="M1033 492V481Q1033 478 1036 478H1128Q1131 478 1131 481V492Z" fill="#2a652a"/>
<use href="#vh" x="1044" y="485"/><text x="1051" y="488" class="h">Mix Shader</text>
<text x="1124" y="506" class="t r">Shader</text>
<text x="1041" y="523" class="t">Fac</text><text x="1041" y="539" class="t">Shader</text><text x="1041" y="554" class="t">Shader</text>

<!-- Add Shader -->
<rect class="n" x="1164" y="564" width="97" height="68" rx="3"/>
<path d="M1164 578V567Q1164 564 1167 564H1258Q1261 564 1261 567V578Z" fill="#2a652a"/>
<use href="#vh" x="1174" y="571"/><text x="1181" y="574" class="h">Add Shader</text>
<text x="1254" y="592" class="t r">Shader</text>
<text x="1171" y="609" class="t">Shader</text><text x="1171" y="625" class="t">Shader</text>

<!-- Material Output -->
<rect class="n" x="1279" y="625" width="98" height="81" rx="3"/>
<path d="M1279 639V628Q1279 625 1282 625H1374Q1377 625 1377 628V639Z" fill="#4d2030"/>
<use href="#vh" x="1290" y="632"/><text x="1297" y="635" class="h">Material Output</text>
<rect x="1286" y="642" width="84" height="13" rx="2" class="d"/><text x="1291" y="651" class="t">All</text><use href="#vs" x="1366" y="649"/>
<text x="1287" y="666" class="t">Surface</text><text x="1287" y="682" class="t">Volume</text><text x="1287" y="697" class="t">Displacement</text>

<!-- Emission -->
<rect class="n" x="807" y="725" width="98" height="69" rx="3"/>
<path d="M807 739V728Q807 725 810 725H902Q905 725 905 728V739Z" fill="#2a652a"/>
<use href="#vh" x="818" y="732"/><text x="825" y="735" class="h">Emission</text>
<text x="897" y="752" class="t r">Emission</text>
<text x="815" y="770" class="t">Color</text>
<rect x="815" y="776" width="83" height="13" rx="2" class="f"/><text x="826" y="785" class="t">Stren...</text><text x="887" y="785" class="t r">16.500</text>

<!-- Normal Map -->
<rect class="n" x="517" y="659" width="105" height="103" rx="3"/>
<path d="M517 673V662Q517 659 520 659H619Q622 659 622 662V673Z" fill="#383a7c"/>
<use href="#vh" x="528" y="666"/><text x="535" y="669" class="h">Normal Map</text>
<text x="615" y="687" class="t r">Normal</text>
<rect x="524" y="697" width="91" height="13" rx="2" class="d"/><text x="530" y="706" class="t" textLength="57">Tangent Space</text><use href="#vs" x="611" y="704"/>
<rect x="524" y="714" width="91" height="13" rx="2" fill="#1e1e1e" stroke="#3e3e3e"/><rect x="528" y="716" width="9" height="9" fill="none" stroke="#ddd" stroke-width=".8"/><rect x="528" y="719" width="4" height="6" fill="#eee"/>
<rect x="524" y="730" width="91" height="13" rx="2" class="f"/><text x="535" y="739" class="t">Strength</text><text x="606" y="739" class="t r">1.000</text>
<text x="525" y="754" class="t">Color</text>

<!-- Bump -->
<rect class="n" x="647" y="685" width="98" height="115" rx="3"/>
<path d="M647 699V688Q647 685 650 685H742Q745 685 745 688V699Z" fill="#383a7c"/>
<use href="#vh" x="657" y="691"/><text x="665" y="695" class="h">Bump</text>
<text x="737" y="712" class="t r">Normal</text>
<rect x="655" y="724" width="9" height="9" rx="1.500" fill="#4772b3"/><polyline points="657,728 659,731 662,726" fill="none" stroke="#fff" stroke-width="1"/>
<text x="666" y="731" class="t">Invert</text>
<rect x="655" y="738" width="82" height="13" rx="2" fill="#4772b3"/><text x="665" y="747" class="t">Streng...</text><text x="728" y="747" class="t r">10.000</text>
<rect x="655" y="753" width="82" height="13" rx="2" class="f"/><text x="665" y="762" class="t">Distance</text><text x="728" y="762" class="t r">1.000</text>
<text x="655" y="778" class="t">Height</text><text x="655" y="793" class="t">Normal</text>

<!-- Image 3 -->
<rect class="n" x="326" y="743" width="168" height="190" rx="3"/>
<path d="M326 756V746Q326 743 329 743H491Q494 743 494 746V756Z" fill="#7d4a1f"/>
<use href="#vh" x="336" y="749"/><text x="343" y="752" class="h" textLength="143">Windows_SG_NormalMap+height.png</text>
<text x="486" y="770" class="t r">Color</text><text x="486" y="785" class="t r">Alpha</text>
<use href="#imgrow" x="333" y="795"/><text x="360" y="804" class="t" textLength="66">Windows_SG_N...</text>
<rect x="333" y="813" width="153" height="13" rx="2" class="d"/><text x="338" y="822" class="t">Linear</text><use href="#vs" x="482" y="820"/>
<rect x="333" y="831" width="153" height="13" rx="2" class="d"/><text x="338" y="840" class="t">Flat</text><use href="#vs" x="482" y="838"/>
<rect x="333" y="848" width="153" height="13" rx="2" class="d"/><text x="338" y="857" class="t">Repeat</text><use href="#vs" x="482" y="855"/>
<rect x="333" y="866" width="153" height="13" rx="2" class="d"/><text x="338" y="875" class="t">Single Image</text><use href="#vs" x="482" y="873"/>
<text x="333" y="893" class="t">Color Space</text><rect x="388" y="884" width="98" height="13" rx="2" class="d"/><text x="393" y="893" class="t">sRGB</text><use href="#vs" x="482" y="891"/>
<text x="333" y="910" class="t">Alpha</text><rect x="388" y="901" width="98" height="13" rx="2" class="d"/><text x="393" y="910" class="t">Straight</text><use href="#vs" x="482" y="908"/>
<text x="333" y="926" class="t">Vector</text>

<!-- Multiply -->
<rect class="n" x="521" y="859" width="98" height="103" rx="3"/>
<path d="M521 873V862Q521 859 524 859H616Q619 859 619 862V873Z" fill="#256380"/>
<use href="#vh" x="531" y="866"/><text x="538" y="869" class="h">Multiply</text>
<text x="611" y="886" class="t r">Value</text>
<rect x="528" y="895" width="83" height="13" rx="2" class="d"/><text x="534" y="905" class="t">Multiply</text><use href="#vs" x="607" y="902"/>
<rect x="528.500" y="915.500" width="9" height="9" rx="1.500" class="k"/><text x="540" y="923" class="t">Clamp</text>
<rect x="528" y="929" width="83" height="13" rx="2" class="f"/><text x="539" y="938" class="t">Value</text><text x="602" y="938" class="t r">0.500</text>
<text x="529" y="954" class="t">Value</text>

<!-- sockets -->
<g>
<g class="b"><circle cx="147" cy="532" r="2.800"/><circle cx="147" cy="548" r="2.800"/><circle cx="147" cy="563" r="2.800"/><circle cx="147" cy="579" r="2.800"/><circle cx="147" cy="594" r="2.800"/><circle cx="147" cy="610" r="2.800"/><circle cx="147" cy="625" r="2.800"/><circle cx="158" cy="564" r="2.800"/><circle cx="158" cy="579" r="2.800"/><circle cx="158" cy="637" r="2.800"/><circle cx="158" cy="695" r="2.800"/><circle cx="257" cy="529" r="2.800"/><circle cx="439" cy="425" r="2.800"/><circle cx="429" cy="629" r="2.800"/><circle cx="325" cy="923" r="2.800"/><circle cx="807" cy="377" r="2.800"/><circle cx="1144" cy="360" r="2.800"/><circle cx="778" cy="533" r="2.800"/><circle cx="622" cy="684" r="2.800"/><circle cx="745" cy="709" r="2.800"/><circle cx="646" cy="790" r="2.800"/><circle cx="1279" cy="694" r="2.800"/></g>
<g class="y"><circle cx="608" cy="269" r="2.800"/><circle cx="598" cy="473" r="2.800"/><circle cx="633" cy="479" r="2.800"/><circle cx="906" cy="261" r="2.800"/><circle cx="807" cy="346" r="2.800"/><circle cx="1101" cy="271" r="2.800"/><circle cx="1144" cy="329" r="2.800"/><circle cx="778" cy="455" r="2.800"/><circle cx="778" cy="635" r="2.800"/><circle cx="806" cy="767" r="2.800"/><circle cx="517" cy="751" r="2.800"/><circle cx="494" cy="767" r="2.800"/></g>
<g class="g"><circle cx="608" cy="285" r="2.800"/><circle cx="598" cy="489" r="2.800"/><circle cx="731" cy="413" r="2.800"/><circle cx="731" cy="429" r="2.800"/><circle cx="731" cy="444" r="2.800"/><circle cx="906" cy="276" r="2.800"/><circle cx="807" cy="362" r="2.800"/><circle cx="1101" cy="286" r="2.800"/><circle cx="932" cy="381" r="2.800"/><circle cx="1144" cy="344" r="2.800"/><circle cx="778" cy="471" r="2.800"/><circle cx="778" cy="486" r="2.800"/><circle cx="778" cy="502" r="2.800"/><circle cx="778" cy="517" r="2.800"/><circle cx="778" cy="651" r="2.800"/><circle cx="1033" cy="520" r="2.800"/><circle cx="806" cy="782" r="2.800"/><circle cx="517" cy="736" r="2.800"/><circle cx="646" cy="744" r="2.800"/><circle cx="646" cy="759" r="2.800"/><circle cx="646" cy="775" r="2.800"/><circle cx="494" cy="782" r="2.800"/><circle cx="619" cy="883" r="2.800"/><circle cx="520" cy="935" r="2.800"/><circle cx="520" cy="951" r="2.800"/></g>
<g class="s"><circle cx="1250" cy="311" r="2.800"/><circle cx="947" cy="440" r="2.800"/><circle cx="1033" cy="536" r="2.800"/><circle cx="1033" cy="551" r="2.800"/><circle cx="1131" cy="503" r="2.800"/><circle cx="1262" cy="589" r="2.800"/><circle cx="1163" cy="606" r="2.800"/><circle cx="1163" cy="622" r="2.800"/><circle cx="1279" cy="663" r="2.800"/><circle cx="1279" cy="679" r="2.800"/><circle cx="905" cy="749" r="2.800"/></g>
</g>

<!-- scrollbars and sidebar -->
<rect x="0" y="974" width="610" height="3" rx="1.500" fill="#353535"/>
<rect x="1460" y="213" width="7" height="268" rx="3.500" fill="#4b4b4b"/>
<rect x="1470" y="204" width="33" height="776" fill="#2a2a2a"/>
<path d="M1503 206H1482Q1478 206 1478 210V312Q1478 316 1482 316H1503Z" fill="#343434"/>
<use href="#v" x="1491" y="219"/><text x="1501" y="223" class="u">N</text>
<text x="1487" y="252" class="u" fill="#bbb">Na.</text><text x="1487" y="277" class="u" fill="#bbb">La.</text>
<path d="M1503 318H1482Q1478 318 1478 322V338Q1478 342 1482 342H1503Z" fill="#343434"/>
<polyline points="1489,327 1493,331 1489,335" class="ch"/><text x="1501" y="335" class="u">P</text>
<rect x="0" y="980" width="1503" height="4" fill="#161616"/>
</svg>
</body></html>
